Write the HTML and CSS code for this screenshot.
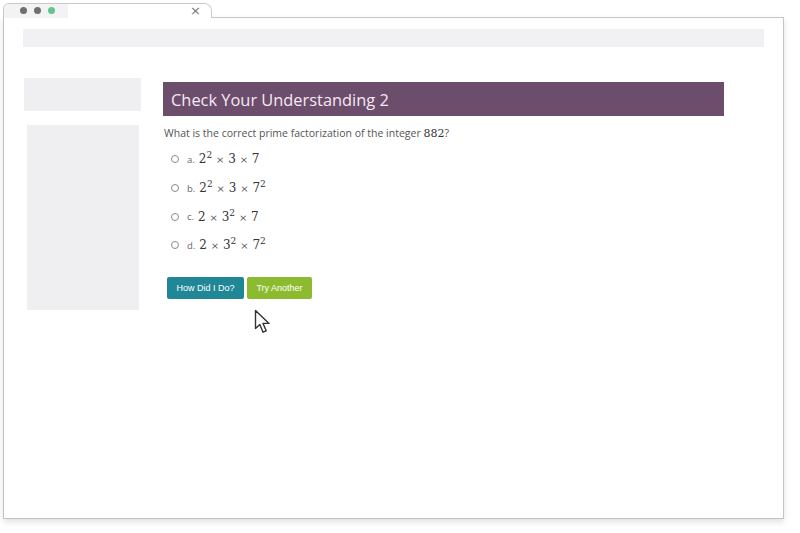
FILE: index.html
```html
<!DOCTYPE html>
<html>
<head>
<meta charset="utf-8">
<link rel="stylesheet" href="styles.css">
</head>
<body>
<div class="window">
  <div class="tabrow">
    <div class="tab">
      <div class="tab-dots">
        <span class="dot"></span><span class="dot"></span><span class="dot green"></span>
      </div>
      <div class="tab-page"><span class="close">×</span></div>
    </div>
  </div>
  <div class="frame">
    <div class="urlbar"></div>
    <div class="content">
      <div class="sidebar">
        <div class="side-top"></div>
        <div class="side-main"></div>
      </div>
      <div class="main">
        <h1 class="heading">Check Your Understanding 2</h1>
        <p class="question">What is the correct prime factorization of the integer <span class="m">882</span>?</p>
        <ul class="options">
          <li class="option"><span class="radio"></span><span class="letter">a.</span><span class="m">2<sup>2</sup> <span class="x">×</span> 3 <span class="x">×</span> 7</span></li>
          <li class="option"><span class="radio"></span><span class="letter">b.</span><span class="m">2<sup>2</sup> <span class="x">×</span> 3 <span class="x">×</span> 7<sup>2</sup></span></li>
          <li class="option"><span class="radio"></span><span class="letter">c.</span><span class="m">2 <span class="x">×</span> 3<sup>2</sup> <span class="x">×</span> 7</span></li>
          <li class="option"><span class="radio"></span><span class="letter">d.</span><span class="m">2 <span class="x">×</span> 3<sup>2</sup> <span class="x">×</span> 7<sup>2</sup></span></li>
        </ul>
        <div class="buttons">
          <button class="btn btn-check">How Did I Do?</button>
          <button class="btn btn-another">Try Another</button>
          <svg class="cursor" width="18" height="26" viewBox="0 0 18 26">
            <path d="M1.5 1.5 L1.5 19.5 L5.8 15.6 L9 23.2 L12.2 21.8 L9 14.4 L15 14.4 Z" fill="#fff" stroke="#333" stroke-width="1.4" stroke-linejoin="round"/>
          </svg>
        </div>
      </div>
    </div>
  </div>
</div>
</body>
</html>
```

FILE: styles.css
```css
html, body {
  margin: 0;
  padding: 0;
  background: #fff;
}
body {
  width: 800px;
  height: 533px;
  overflow: hidden;
  font-family: "Open Sans", "Liberation Sans", sans-serif;
}
.window {
  margin-left: 3px;
  width: 781px;
  padding-top: 3px;
}
.tabrow {
  display: flex;
  height: 15px;
  position: relative;
  z-index: 2;
  margin-bottom: -1px;
}
.tab {
  width: 209px;
  height: 15px;
  border: 1px solid #c9c9cc;
  border-bottom: 0;
  border-radius: 6px 8px 0 0;
  display: flex;
  overflow: hidden;
  background: #fff;
  box-sizing: border-box;
}
.tab-dots {
  width: 64px;
  background: #f3f3f4;
  display: flex;
  align-items: center;
  gap: 7px;
  padding-left: 16px;
  box-sizing: border-box;
  padding-bottom: 1px;
}
.dot {
  width: 7px;
  height: 7px;
  border-radius: 50%;
  background: #6e6e73;
}
.dot.green {
  background: #63c58f;
}
.tab-page {
  flex: 1;
  display: flex;
  justify-content: flex-end;
  align-items: center;
  padding-right: 10px;
  background: #fff;
}
.close {
  font-family: "DejaVu Sans", sans-serif;
  font-size: 13px;
  line-height: 12px;
  color: #77777c;
}
.frame {
  height: 502px;
  border: 1px solid #c4c4c8;
  background: #fff;
  box-shadow: 0 3px 6px rgba(0,0,0,0.12);
  padding: 11px 19px 0 19px;
  box-sizing: border-box;
}
.urlbar {
  height: 18px;
  background: #f1f1f3;
}
.content {
  display: flex;
  margin-top: 31px;
}
.sidebar {
  width: 117px;
  margin-left: 1px;
  display: flex;
  flex-direction: column;
  gap: 14px;
}
.side-top {
  height: 33px;
  background: #efeff1;
}
.side-main {
  margin-left: 3px;
  width: 112px;
  height: 185px;
  background: #efeff1;
}
.main {
  margin-left: 22px;
  margin-top: 4px;
  width: 561px;
}
.heading {
  margin: 0;
  height: 34px;
  background: #6c4d6c;
  color: #f6e8f4;
  font-weight: 400;
  font-size: 16.4px;
  line-height: 35px;
  padding-left: 8px;
}
.question {
  margin: 10px 0 0 1px;
  font-size: 10.5px;
  line-height: 14px;
  color: #555;
}
.m {
  font-family: "DejaVu Serif", "Liberation Serif", serif;
  font-size: 12px;
  color: #333;
}
.x {
  font-size: 10px;
  color: #555;
}
.question .m {
  font-size: 11px;
}
.m sup {
  font-size: 9px;
  line-height: 0;
  vertical-align: 0.6em;
}
.options {
  list-style: none;
  margin: 4px 0 0 0;
  padding: 0;
}
.option {
  display: flex;
  align-items: center;
  height: 28.7px;
  margin-left: 8px;
}
.radio {
  width: 6px;
  height: 6px;
  border: 1px solid #8a8a8a;
  border-radius: 50%;
  margin-right: 8px;
}
.letter {
  font-size: 9.5px;
  color: #666;
  margin-right: 4px;
}
.buttons {
  display: flex;
  gap: 3px;
  margin-top: 17px;
  margin-left: 4px;
  position: relative;
}
.btn {
  height: 22px;
  border: 0;
  border-radius: 2px;
  color: #fff;
  font-family: "Liberation Sans", sans-serif;
  font-size: 9px;
  padding: 0;
}
.btn-check {
  width: 77px;
  background: #1f8796;
}
.btn-another {
  width: 65px;
  background: #8cbb2f;
}
.cursor {
  position: absolute;
  left: 87px;
  top: 32px;
}
```
